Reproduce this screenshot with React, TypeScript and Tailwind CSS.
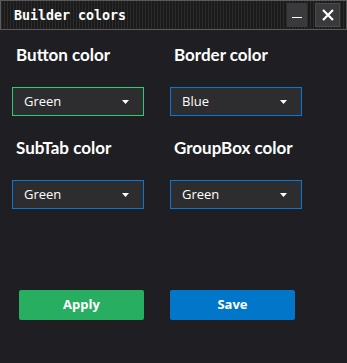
import React from 'react';

interface Field {
    label: string;
    value: string;
    focused: boolean;
}

const FIELDS: Field[] = [
    { label: 'Button color', value: 'Green', focused: true },
    { label: 'Border color', value: 'Blue', focused: false },
    { label: 'SubTab color', value: 'Green', focused: false },
    { label: 'GroupBox color', value: 'Green', focused: false },
];

const Dropdown: React.FC<{ field: Field }> = ({ field }) => (
    <div>
        <div className="pl-1 h-[42px] text-white font-bold text-[17px] leading-[20px] font-['Lato',sans-serif]">
            {field.label}
        </div>
        <div
            className={
                field.focused
                    ? 'h-[29px] shadow-[inset_0_0_0_1px_#2ecc71] bg-[#2d2d2f] flex items-center justify-between pl-[12px] pr-[15px]'
                    : 'h-[29px] shadow-[inset_0_0_0_1px_#0a78d2] bg-[#2d2d2f] flex items-center justify-between pl-[12px] pr-[15px]'
            }
        >
            <span className="text-[13px] text-white font-['Open_Sans',sans-serif]">{field.value}</span>
            <svg width="7" height="4" viewBox="0 0 7 4">
                <path d="M0 0 H7 L3.5 4 Z" fill="#ffffff" />
            </svg>
        </div>
    </div>
);

export default function App() {
    return (
        <div className="w-[347px] h-[363px] bg-[#1f1f23] flex flex-col">
            {/* Title bar */}
            <div className="h-[30px] border border-[#5a5a5a] bg-[repeating-linear-gradient(90deg,#2b2b2b_0px,#2b2b2b_1px,#1b1b1b_1px,#1b1b1b_3px)] flex items-center pl-[13px] pr-[6px]">
                <span className="text-white font-bold text-[13.3px] font-['DejaVu_Sans_Mono',monospace] flex-1 pt-[1px]">
                    Builder colors
                </span>
                <div className="w-[20px] h-[24px] bg-[#3a3a3c] flex items-end justify-center pb-[9px]">
                    <div className="w-[10px] h-[1px] bg-white" />
                </div>
                <div className="ml-[8px] w-[25px] h-[24px] bg-[#3a3a3c] border border-[#4a4a4a] flex items-center justify-center">
                    <svg width="12" height="12" viewBox="0 0 12 12">
                        <path d="M1 1 L11 11 M11 1 L1 11" stroke="#ffffff" strokeWidth="2.2" />
                    </svg>
                </div>
            </div>

            {/* Fields */}
            <div className="grid grid-cols-[132px_132px] gap-x-[26px] gap-y-[22px] pl-[12px] pt-[15px]">
                {FIELDS.map((f) => (
                    <Dropdown key={f.label} field={f} />
                ))}
            </div>

            {/* Buttons */}
            <div className="flex gap-[26px] pl-[19px] mt-[81px]">
                <button className="w-[125px] h-[30px] rounded-[2px] bg-[#27ae60] text-white font-bold text-[13px] font-['Open_Sans',sans-serif]">
                    Apply
                </button>
                <button className="w-[125px] h-[30px] rounded-[2px] bg-[#0277c9] text-white font-bold text-[13px] font-['Open_Sans',sans-serif]">
                    Save
                </button>
            </div>
        </div>
    );
}
